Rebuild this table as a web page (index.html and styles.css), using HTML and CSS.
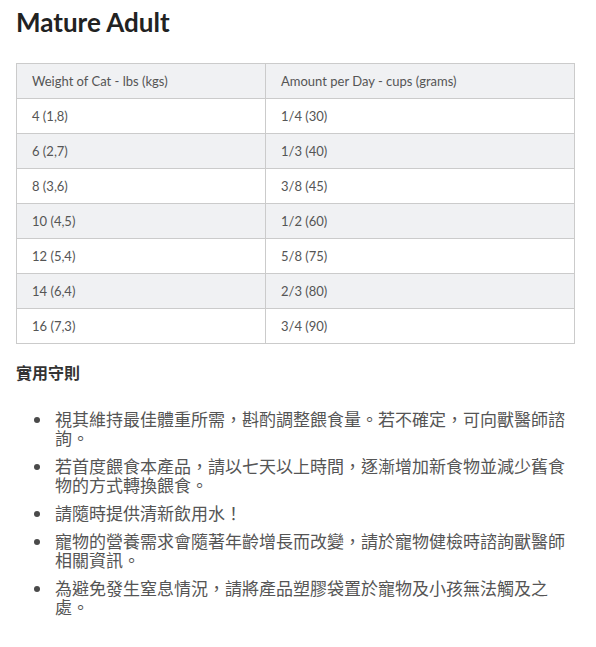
FILE: index.html
```html
<!DOCTYPE html>
<html lang="zh-Hant">
<head>
<meta charset="utf-8">
<link rel="stylesheet" href="styles.css">
</head>
<body>
<div class="page">
  <h1 class="title">Mature Adult</h1>
  <table class="feed">
    <thead>
      <tr><th>Weight of Cat - lbs (kgs)</th><th>Amount per Day - cups (grams)</th></tr>
    </thead>
    <tbody>
      <tr><td>4 (1,8)</td><td>1/4 (30)</td></tr>
      <tr class="alt"><td>6 (2,7)</td><td>1/3 (40)</td></tr>
      <tr><td>8 (3,6)</td><td>3/8 (45)</td></tr>
      <tr class="alt"><td>10 (4,5)</td><td>1/2 (60)</td></tr>
      <tr><td>12 (5,4)</td><td>5/8 (75)</td></tr>
      <tr class="alt"><td>14 (6,4)</td><td>2/3 (80)</td></tr>
      <tr><td>16 (7,3)</td><td>3/4 (90)</td></tr>
    </tbody>
  </table>
  <h3 class="tips-title">實用守則</h3>
  <ul class="tips">
    <li>視其維持最佳體重所需，斟酌調整餵食量。若不確定，可向獸醫師諮詢。</li>
    <li>若首度餵食本產品，請以七天以上時間，逐漸增加新食物並減少舊食物的方式轉換餵食。</li>
    <li>請隨時提供清新飲用水！</li>
    <li>寵物的營養需求會隨著年齡增長而改變，請於寵物健檢時諮詢獸醫師相關資訊。</li>
    <li>為避免發生窒息情況，請將產品塑膠袋置於寵物及小孩無法觸及之處。</li>
  </ul>
</div>
</body>
</html>
```

FILE: styles.css
```css
html, body {
  margin: 0;
  padding: 0;
  background: #fff;
}
.page {
  width: 559px;
  padding: 0 16px;
}
.title {
  font-family: Lato, "Liberation Sans", sans-serif;
  font-weight: 700;
  font-size: 26px;
  line-height: 30px;
  color: #222;
  margin: 7px 0 26px;
}
.feed {
  width: 559px;
  border-collapse: collapse;
  font-family: Lato, "Liberation Sans", sans-serif;
  font-size: 13px;
  color: #555;
}
.feed th, .feed td {
  border: 1px solid #cbcbcb;
  padding: 9px 15px;
  line-height: 16px;
  height: 16px;
  text-align: left;
  font-weight: 400;
}
.feed th:first-child, .feed td:first-child {
  width: 218px;
}
.feed thead tr, .feed tr.alt {
  background: #f0f1f3;
}
.tips-title {
  font-family: "Liberation Sans", "Noto Sans CJK TC", sans-serif;
  font-size: 16px;
  font-weight: 700;
  line-height: 20px;
  color: #333;
  margin: 20px 0 0;
}
.tips {
  font-family: "Liberation Sans", "Noto Sans CJK TC", sans-serif;
  font-size: 17px;
  line-height: 19px;
  color: #555;
  margin: 27px 0 0;
  padding-left: 39px;
  list-style: none;
}
.tips li {
  margin-bottom: 9px;
}
.tips li::before {
  content: "";
  display: inline-block;
  width: 6px;
  height: 6px;
  border-radius: 50%;
  background: #4a4a4a;
  margin-left: -21px;
  margin-right: 15px;
  vertical-align: 3px;
}
```
